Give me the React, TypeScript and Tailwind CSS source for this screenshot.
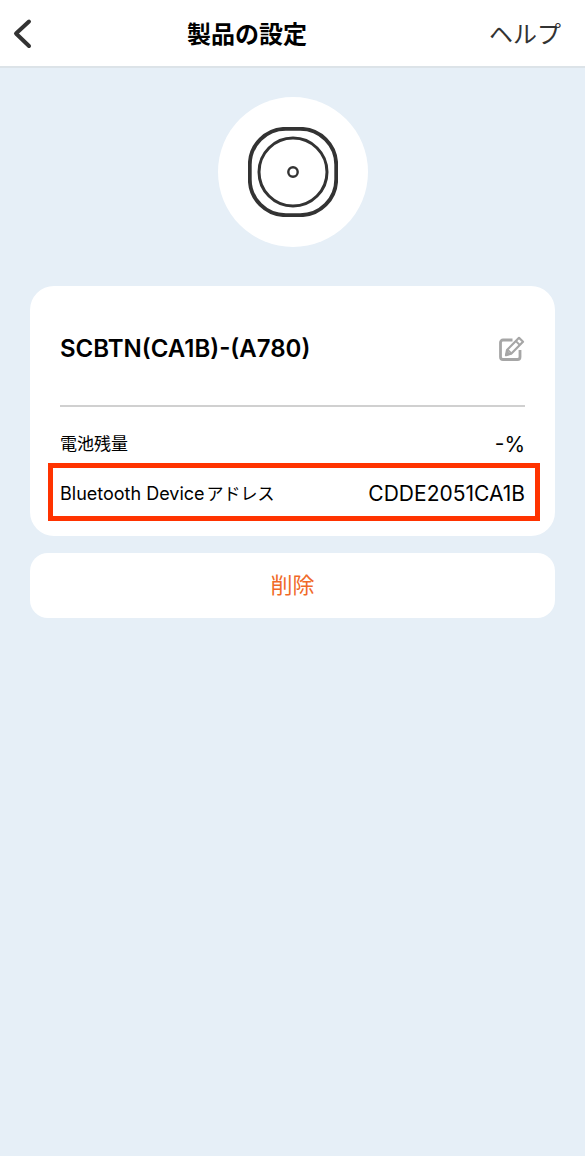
import React from "react";

function BackIcon() {
  return (
    <svg className="h-8 w-5" viewBox="0 0 20 32" fill="none" aria-hidden="true">
      <path
        d="M17 4.5L4 16.5L17 29"
        stroke="#333333"
        strokeWidth="4"
        strokeLinecap="round"
        strokeLinejoin="round"
      />
    </svg>
  );
}

function ButtonDeviceIcon() {
  return (
    <svg className="size-[90px]" viewBox="0 0 90 90" fill="none" stroke="#333333" aria-hidden="true">
      <rect x="1.8" y="1.8" width="86.4" height="86.4" rx="36" strokeWidth="3.8" />
      <circle cx="45" cy="45" r="34" strokeWidth="3" />
      <circle cx="45" cy="45" r="4.7" strokeWidth="2.4" />
    </svg>
  );
}

function EditIcon() {
  return (
    <svg
      className="size-7"
      viewBox="0 0 28 28"
      fill="none"
      stroke="#a6a6a6"
      strokeLinejoin="round"
      aria-hidden="true"
    >
      <path
        d="M15.5 5H6A2.500 2.500 0 0 0 3.500 7.500V22A2.500 2.500 0 0 0 6 24.500H20.500A2.500 2.500 0 0 0 23 22V15"
        strokeWidth="2.800"
      />
      <path d="M10 15L22 2.800L26 6.800L14.200 18.800L9 20.200Z" strokeWidth="2.200" />
      <path d="M18.800 6L22.800 10M10.800 14.800L14.200 18.200" strokeWidth="1.800" />
      <path d="M8.800 20.300L10 15.800L13.300 19Z" fill="#a6a6a6" strokeWidth="1" />
    </svg>
  );
}

function Header() {
  return (
    <header className="flex h-[68px] items-center border-b-2 border-[#dce3e8] bg-white">
      <button type="button" aria-label="戻る" className="flex w-11 pl-3">
        <BackIcon />
      </button>
      <h1 className="flex-1 pt-1 text-center text-2xl font-bold">製品の設定</h1>
      <a href="#help" className="w-[135px] pt-1 pr-6 text-right text-2xl text-[#333333]">
        ヘルプ
      </a>
    </header>
  );
}

export default function App() {
  return (
    <div className="min-h-screen bg-[#e6eff7] font-['Inter','Noto_Sans_CJK_JP',sans-serif] text-black">
      <Header />

      <main className="flex flex-col px-[30px] pt-[29px]">
        <div className="flex size-[150px] items-center justify-center self-center rounded-full bg-white">
          <ButtonDeviceIcon />
        </div>

        <section className="mt-[39px] rounded-3xl bg-white px-[30px] pb-[15px]">
          <div className="flex h-[121px] items-center justify-between border-b-2 border-[#d0d0d0] pt-[6px]">
            <h2 className="text-2xl font-semibold">SCBTN(CA1B)-(A780)</h2>
            <button type="button" aria-label="名前を編集">
              <EditIcon />
            </button>
          </div>

          <dl className="pt-4">
            <div className="flex h-10 items-center justify-between pt-[3px]">
              <dt className="text-[17px]">電池残量</dt>
              <dd className="text-[21px]">-%</dd>
            </div>
            <div className="-mr-[15px] -ml-3 flex h-[58px] items-center justify-between border-5 border-[#ff3300] pt-[3px] pr-[10px] pl-[7px]">
              <dt className="text-[18px]">
                Bluetooth Device<span className="ml-0.5 text-[17px]">アドレス</span>
              </dt>
              <dd className="text-[21px]">CDDE2051CA1B</dd>
            </div>
          </dl>
        </section>

        <button
          type="button"
          className="mt-[17px] h-[65px] rounded-[18px] bg-white text-[22px] text-[#f06a28]"
        >
          削除
        </button>
      </main>
    </div>
  );
}
